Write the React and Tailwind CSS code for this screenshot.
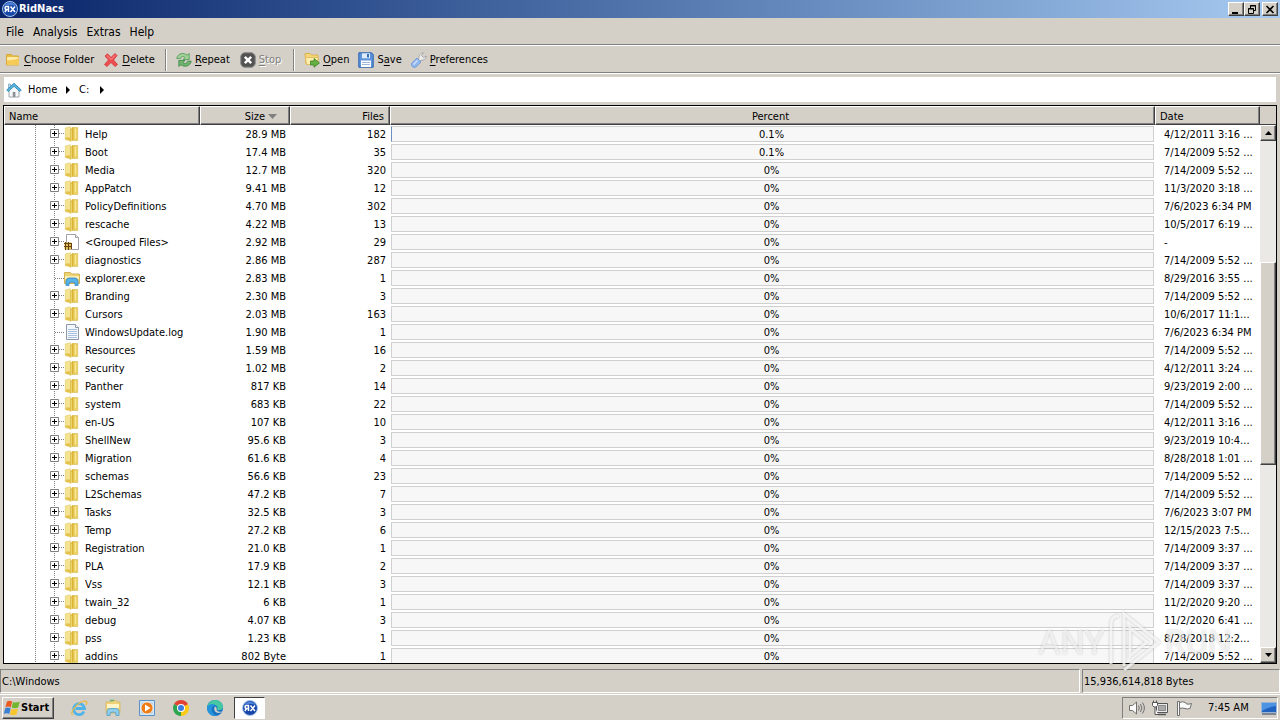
import React, { useState } from 'react';

const rows = [
    { name: "Help", size: "28.9 MB", files: 182, percent: "0.1%", date: "4/12/2011 3:16 ..." },
    { name: "Boot", size: "17.4 MB", files: 35, percent: "0.1%", date: "7/14/2009 5:52 ..." },
    { name: "Media", size: "12.7 MB", files: 320, percent: "0%", date: "7/14/2009 5:52 ..." },
    { name: "AppPatch", size: "9.41 MB", files: 12, percent: "0%", date: "11/3/2020 3:18 ..." },
    { name: "PolicyDefinitions", size: "4.70 MB", files: 302, percent: "0%", date: "7/6/2023 6:34 PM" },
    { name: "rescache", size: "4.22 MB", files: 13, percent: "0%", date: "10/5/2017 6:19 ..." },
    { name: "<Grouped Files>", size: "2.92 MB", files: 29, percent: "0%", date: "-", type: "group" },
    { name: "diagnostics", size: "2.86 MB", files: 287, percent: "0%", date: "7/14/2009 5:52 ..." },
    { name: "explorer.exe", size: "2.83 MB", files: 1, percent: "0%", date: "8/29/2016 3:55 ...", type: "exe" },
    { name: "Branding", size: "2.30 MB", files: 3, percent: "0%", date: "7/14/2009 5:52 ..." },
    { name: "Cursors", size: "2.03 MB", files: 163, percent: "0%", date: "10/6/2017 11:1..." },
    { name: "WindowsUpdate.log", size: "1.90 MB", files: 1, percent: "0%", date: "7/6/2023 6:34 PM", type: "log" },
    { name: "Resources", size: "1.59 MB", files: 16, percent: "0%", date: "7/14/2009 5:52 ..." },
    { name: "security", size: "1.02 MB", files: 2, percent: "0%", date: "4/12/2011 3:24 ..." },
    { name: "Panther", size: "817 KB", files: 14, percent: "0%", date: "9/23/2019 2:00 ..." },
    { name: "system", size: "683 KB", files: 22, percent: "0%", date: "7/14/2009 5:52 ..." },
    { name: "en-US", size: "107 KB", files: 10, percent: "0%", date: "4/12/2011 3:16 ..." },
    { name: "ShellNew", size: "95.6 KB", files: 3, percent: "0%", date: "9/23/2019 10:4..." },
    { name: "Migration", size: "61.6 KB", files: 4, percent: "0%", date: "8/28/2018 1:01 ..." },
    { name: "schemas", size: "56.6 KB", files: 23, percent: "0%", date: "7/14/2009 5:52 ..." },
    { name: "L2Schemas", size: "47.2 KB", files: 7, percent: "0%", date: "7/14/2009 5:52 ..." },
    { name: "Tasks", size: "32.5 KB", files: 3, percent: "0%", date: "7/6/2023 3:07 PM" },
    { name: "Temp", size: "27.2 KB", files: 6, percent: "0%", date: "12/15/2023 7:5..." },
    { name: "Registration", size: "21.0 KB", files: 1, percent: "0%", date: "7/14/2009 3:37 ..." },
    { name: "PLA", size: "17.9 KB", files: 2, percent: "0%", date: "7/14/2009 3:37 ..." },
    { name: "Vss", size: "12.1 KB", files: 3, percent: "0%", date: "7/14/2009 3:37 ..." },
    { name: "twain_32", size: "6 KB", files: 1, percent: "0%", date: "11/2/2020 9:20 ..." },
    { name: "debug", size: "4.07 KB", files: 3, percent: "0%", date: "11/2/2020 6:41 ..." },
    { name: "pss", size: "1.23 KB", files: 1, percent: "0%", date: "8/28/2018 12:2..." },
    { name: "addins", size: "802 Byte", files: 1, percent: "0%", date: "7/14/2009 5:52 ..." },
];

const raised = "border border-t-white border-l-white border-r-[#404040] border-b-[#404040] bg-[#d4d0c8] shadow-[inset_-1px_-1px_0_#808080]";

const AppLogo = () => (
    <svg width="16" height="16" viewBox="0 0 16 16">
        <circle cx="8" cy="8" r="7.500" fill="#1546a8" stroke="#a9c6f0" />
        <path d="M2.200 5a6.500 6.500 0 0 1 11.600 0Q8 3 2.200 5Z" fill="#4c80d6" />
        <path d="M6.500 11V5.500H4.500a1.500 1.500 0 0 0 0 3h2M4.700 8.500 2.800 11M8.500 5.500l4.500 5.500M13 5.500 8.500 11" fill="none" stroke="#fff" strokeWidth="1.500" />
    </svg>
);

const FolderIcon = () => (
    <svg width="16" height="16" viewBox="0 0 16 16">
        <path d="M1.500 2.500h5l1 1.500h6v9h-12z" fill="#e9bd45" stroke="#d9a93a" />
        <path d="M2 5h11.500v7.500H2z" fill="#fdeaa6" />
        <path d="M2 8.500q6 0 11.500-2v6H2z" fill="#f6cb55" />
    </svg>
);

const DeleteIcon = () => (
    <svg width="16" height="16" viewBox="0 0 16 16">
        <path d="M2 4 4.500 1.800 8 5.500 12 1.500 14 3.500 10.500 8 14.500 12.500 12 14.500 8 10.500 4 14.500 1.500 12.500 5.500 8Z" fill="#ee4d50" stroke="#d23439" strokeWidth=".8" />
        <path d="M4 3.500 8 7.500l4-4" stroke="#ff9a98" fill="none" />
    </svg>
);

const RepeatIcon = () => (
    <svg width="16" height="16" viewBox="0 0 16 16">
        <path d="M.8 6.500C1.500 1 8 .3 11 3.200L13.200 1.500v6H7L9 5.500C7 3.800 5 4.500 4.500 6.800Z" fill="#9ed098" stroke="#4c9652" strokeWidth=".8" />
        <path d="M15.200 9c-.7 5.500-7 6.500-10.200 3.700L2.800 14.500v-6H9L7 10.500c2 1.700 4 1 4.500-1.300Z" fill="#6fb56d" stroke="#3f8747" strokeWidth=".8" />
    </svg>
);

const StopIcon = () => (
    <svg width="16" height="16" viewBox="0 0 16 16">
        <path d="M4 .800h8Q14 1.500 15.200 4v8Q14 14.500 12 15.200H4Q1.500 14.500.8 12V4Q1.500 1.500 4 .800Z" fill="#525252" stroke="#858585" />
        <path d="m4.800 4.800 6.400 6.400M11.200 4.800l-6.400 6.400" stroke="#fff" strokeWidth="2.400" />
    </svg>
);

const OpenIcon = () => (
    <svg width="16" height="16" viewBox="0 0 16 16">
        <path d="M1 1.500h5L7.500 3H14v9H2z" fill="#f5d67a" stroke="#d9a93a" strokeWidth=".8" />
        <path d="M1.500 5.500h13L12.500 12.500H2.500z" fill="#fdeeb0" stroke="#e0b850" strokeWidth=".8" />
        <path d="M6.500 9H10V6.500l5.500 4.400L10 15.300V13H6.500z" fill="#66b045" stroke="#3c8028" strokeWidth=".8" />
    </svg>
);

const SaveIcon = () => (
    <svg width="16" height="16" viewBox="0 0 16 16">
        <path d="M.8.800h12.700L15.200 2.500v12.700H.8z" fill="#5d94dc" stroke="#2c61ae" />
        <path d="M4 1.300h8v5H4z" fill="#dcecfb" />
        <path d="M9 2h2v3.500H9z" fill="#386fb8" />
        <path d="M3 8.500h10V15H3z" fill="#fff" />
        <path d="M4 10.500h8M4 12.500h8" stroke="#9db8d8" />
    </svg>
);

const WrenchIcon = () => (
    <svg width="16" height="16" viewBox="0 0 16 16">
        <path d="M8 6.500C7.500 3.500 9.500 1 12.500.800L10.500 3.500l2 2L15.300 4c0 3-2.500 4.500-5.300 4.200L8.500 9.500 7 8Z" fill="#ececec" stroke="#9b9b9b" strokeWidth=".8" />
        <path d="M6 6 10 10 5 15C2 16.500-.8 13.500.8 11Z" fill="#92b6ee" stroke="#6a92d4" strokeWidth=".8" />
        <path d="M6.500 8.500 2.500 12.500" stroke="#cfe0fb" strokeWidth="1.400" />
    </svg>
);

const HomeIcon = () => (
    <svg width="16" height="16" viewBox="0 0 16 16">
        <path d="M3 7.500 8 3l5 4.500V15H3z" fill="#f6f8fa" stroke="#8b9298" strokeWidth=".8" />
        <path d="M2.500 2h2v4h-2z" fill="#c1dbe9" stroke="#5c95b5" strokeWidth=".6" />
        <path d="M.7 8 8 1.200 15.300 8l-1.500 1.500L8 4.300 2.200 9.500Z" fill="#55b4df" stroke="#2b7fad" strokeWidth=".8" />
        <path d="M6.800 10h2.600v5H6.800z" fill="#8a8f95" />
    </svg>
);

const RowIcon = ({ type }) => {
    if (type === "group") {
        return (
            <svg width="16" height="16" viewBox="0 0 16 16">
                <path d="M2.500.500h9l3 3v12h-12z" fill="#fff" stroke="#a3a0a8" />
                <path d="M11.500.500v3h3" fill="#e8e8e8" stroke="#a3a0a8" />
                <path d="M.5 8.500h7v7h-7z" fill="#e3bd5a" />
                <path d="M1.500 8v8M4.500 8v8M7.500 9v6M0 9.500h8M0 12.500h8" stroke="#65430c" />
            </svg>
        );
    }
    if (type === "exe") {
        return (
            <svg width="16" height="16" viewBox="0 0 16 16">
                <path d="M.5 2.500h6l1 1.500h8v9.500H.5z" fill="#edd374" stroke="#d3b352" />
                <path d="M1 6h14v3H1z" fill="#fbeeb0" />
                <path d="M2 15.500V11Q2.500 8 5 8h6q2.500 0 3 3v4.500h-3V13q-3-2-6 0v2.500z" fill="#58b3ea" stroke="#2f86c8" strokeWidth=".8" />
            </svg>
        );
    }
    if (type === "log") {
        return (
            <svg width="16" height="16" viewBox="0 0 16 16">
                <path d="M2.500.500h9l3 3v12h-12z" fill="#f3f7fb" stroke="#8d99a8" />
                <path d="M11.500.500v3h3" fill="#fff" stroke="#8d99a8" />
                <path d="M4 5.500h9M4 7.500h9M4 9.500h9M4 11.500h9M4 13.500h9" stroke="#a9c1dc" />
            </svg>
        );
    }
    return (
        <svg width="16" height="16" viewBox="0 0 16 16">
            <path d="M1.300 2 6.500.800V15L1.300 13.500z" fill="#f4e391" stroke="#e0c864" strokeWidth=".6" />
            <path d="M8 1.500h5.700V14.500H8z" fill="#ecd264" stroke="#d5b94f" strokeWidth=".6" />
            <path d="M6 3.500 9.500 1v12.500L6 15.800z" fill="#d9b236" />
            <path d="M7.200 3.500v11.300" stroke="#f3e38a" />
            <path d="M11.500 3v9" stroke="#f8e99a" strokeWidth="1.200" />
            <path d="M1.500 11.500h4.500v3l-4.500-1z" fill="#e3c14a" />
        </svg>
    );
};

// dotted guide lines and the [+] box left of every row
const TreeGutter = ({ leaf, name }) => (
    <>
        <svg width="46" height="18" className="shrink-0">
            <path d="M31.500 0v18" stroke="#808080" strokeDasharray="1 1" />
        </svg>
        {leaf ? (
            <svg width="14" height="18" className="shrink-0">
                <path d="M4.500 0v18M5 9.500h9" stroke="#808080" strokeDasharray="1 1" />
            </svg>
        ) : (
            <button type="button" aria-label={"Expand " + name} className="shrink-0">
                <svg width="14" height="18">
                    <path d="M4.500 0v18M9 8.500h5" stroke="#808080" strokeDasharray="1 1" />
                    <path d="M.5 4.500h8v8h-8z" fill="#fff" stroke="#808080" />
                    <path d="M2 8.500h5M4.500 6v5" stroke="#000" />
                </svg>
            </button>
        )}
    </>
);

const ToolButton = ({ icon, label, hot, disabled }) => {
    const at = label.indexOf(hot);
    return (
        <button
            type="button"
            disabled={disabled}
            className="flex items-center gap-[3px] disabled:text-[#808080] disabled:[text-shadow:1px_1px_0_#fff]"
        >
            {icon}
            <span className="pt-px">
                {label.slice(0, at)}
                <u className="underline-offset-2">{hot}</u>
                {label.slice(at + 1)}
            </span>
        </button>
    );
};

const Separator = () => (
    <div className="h-[22px] w-[2px] border-l border-r border-l-[#808080] border-r-white"></div>
);

const Header = ({ children, className }) => (
    <th className={"h-[19px] border-b border-r border-b-[#404040] border-r-[#404040] border-t border-t-white border-l border-l-white bg-[#d4d0c8] px-1 pt-[2px] pb-0 font-normal shadow-[inset_-1px_-1px_0_#808080] " + className}>
        {children}
    </th>
);

const IeIcon = () => (
    <svg width="18" height="18" viewBox="0 0 18 18">
        <path d="M14 12.500A5.500 5.500 0 1 1 14.500 9.500H5.500" fill="none" stroke="#4fb3e8" strokeWidth="2.800" />
        <path d="M2.500 16C-1 13.500 9 1.500 15.500 2.200 18 2.500 16.500 5 16 6" fill="none" stroke="#e5bb52" strokeWidth="1.400" />
    </svg>
);

const ExplorerIcon = () => (
    <svg width="18" height="18" viewBox="0 0 18 18">
        <path d="M2 3h5l1-1.500h4L13 3h3v11H2z" fill="#f0d27a" stroke="#d8b75a" strokeWidth=".8" />
        <path d="M3 5h12v4H3z" fill="#fff5c8" />
        <path d="M6 1.500h4" stroke="#68b46c" strokeWidth="1.500" />
        <path d="M3 16.500V12q.5-2.500 3-2.500h6q2.500 0 3 2.500v4.500h-3V14q-3-2-6 0v2.500z" fill="#8fcdec" stroke="#519fca" strokeWidth=".8" />
    </svg>
);

const MediaIcon = () => (
    <svg width="18" height="18" viewBox="0 0 18 18">
        <path d="M1.500 1.500h15v15h-15z" fill="#d4e4f4" stroke="#5992c7" />
        <path d="M3.500 3.500h11v11h-11z" fill="#a9c9e8" />
        <circle cx="9" cy="9" r="6" fill="#ee7d15" stroke="#fff" strokeWidth=".7" />
        <path d="m7 5.500 5.500 3.500L7 12.500z" fill="#fff" />
    </svg>
);

const ChromeIcon = () => (
    <svg width="18" height="18" viewBox="0 0 18 18">
        <path d="M9 9 2.100 5A8 8 0 0 1 15.900 5Z" fill="#e04334" />
        <path d="M9 9 15.900 5A8 8 0 0 1 9 17Z" fill="#fbc916" />
        <path d="M9 9v8A8 8 0 0 1 2.100 5Z" fill="#2da44e" />
        <path d="M9 5h6.900L9 9z" fill="#e04334" />
        <circle cx="9" cy="9" r="4" fill="#fff" />
        <circle cx="9" cy="9" r="3" fill="#3b7de0" />
    </svg>
);

const EdgeIcon = () => (
    <svg width="18" height="18" viewBox="0 0 18 18">
        <circle cx="9" cy="9" r="8" fill="#1673c4" />
        <path d="M1.200 8C2 3.500 5.500 1 9.500 1c5 0 8 4 7.300 7.500-.5 2.300-2.800 3.300-5.800 2.500 1.500-3-.5-5-3-5C4.500 6 2 7 1.200 8Z" fill="#45c7a4" />
        <path d="M1.200 8C2.500 5 7 4 9.500 6.500 6.500 6.500 5 9 6 12c1 3 3 4.500 5 4.800C5 18 .5 13.500 1.200 8Z" fill="#2694dc" />
        <path d="M9 7.500c2 1 2 2.500 1.500 3.500 1 2 4 2.200 6 1.200-2 2.300-6 2.300-7.500 0-1-1.500-1-3.500 0-4.700Z" fill="#d4d0c8" />
    </svg>
);

const WindowsFlag = () => (
    <svg width="16" height="16" viewBox="0 0 16 16">
        <path d="M3 1.500Q5.500 0 8.200 1.500L6.900 7.300Q4.300 5.800 1.400 7.200Z" fill="#ea5a24" />
        <path d="M9 2Q12 3.300 15.700 1.500L14.200 7.600Q10.700 9 7.700 7.600Z" fill="#72b62e" />
        <path d="M1.200 8.200Q4 6.800 6.700 8.300L5.300 14Q2.800 12.500-.2 13.900Z" fill="#3c80d2" />
        <path d="M7.500 8.700Q10.400 10 14 8.500L12.500 14.500Q9 16 6 14.500Z" fill="#f6c62c" />
    </svg>
);

const SpeakerIcon = () => (
    <svg width="18" height="16" viewBox="0 0 18 16" fill="none" stroke="#6e6e6e">
        <path d="M1.500 5.500h3L8.500 2v12l-4-3.500h-3z" fill="#fafafa" />
        <path d="M10.500 5.500q1.500 2.500 0 5M12.500 4q2.700 4 0 8M14.500 2.500q3.800 5.500 0 11" />
    </svg>
);

const NetworkIcon = () => (
    <svg width="16" height="16" viewBox="0 0 16 16" fill="none" stroke="#555">
        <path d="M4.500 3.500h11v9h-11z" fill="#e8e8e8" />
        <path d="M6.500 5.500h7v5h-7z" fill="#aaa" stroke="#8a8a8a" />
        <path d="M6 14.500h8" strokeWidth="1.500" />
        <path d="M.5 2.500h5v3L4 7H2L.5 5.500zM1.500.500v2M4.500.500v2M3 7v7.500h3" fill="#fff" />
    </svg>
);

const FlagIcon = () => (
    <svg width="16" height="16" viewBox="0 0 16 16" fill="#fafafa" stroke="#6e6e6e">
        <path d="M3.500 2.500q3-1.500 6 0l1 1.500q2.500.500 5-.5l-1.500 5q-2.500 1-5 0-2.500-1-5.500 0z" />
        <path d="M1.500 1.500h2v14h-2z" />
    </svg>
);

const DesktopIcon = () => (
    <svg width="16" height="14" viewBox="0 0 16 14">
        <path d="M.5 1.500h15v10H.5z" fill="#1f62c0" stroke="#9bb4d4" />
        <path d="M1 2h14v3Q7 6 1 10z" fill="#4d93e4" />
        <path d="M1 13h14" stroke="#26395c" />
    </svg>
);

const Watermark = () => (
    <div aria-hidden="true" className="pointer-events-none absolute right-[48px] bottom-[46px] flex items-center gap-[2px] font-[Roboto,sans-serif] text-[34px] leading-none text-white/60 [filter:drop-shadow(0_0_1px_rgba(0,0,0,0.3))]">
        <span>ANY</span>
        <svg width="56" height="64" viewBox="0 0 56 64" fill="none" stroke="#fff" strokeOpacity=".75" strokeWidth="3">
            <path d="M4 54V14Q4 6 12 6M17 56V4L52 32 17 60M23 18v28l17-14z" />
        </svg>
        <span>RUN</span>
    </div>
);

const App = () => {
    const [selected, setSelected] = useState(null);

    return (
        <div className="relative flex h-screen flex-col overflow-hidden bg-[#d4d0c8] font-['DejaVu_Sans_Condensed','DejaVu_Sans',sans-serif] text-[11px] leading-[14px] text-black">
            {/* Title bar */}
            <header className="flex h-[18px] shrink-0 items-center justify-between bg-linear-to-r from-[#0a246a] to-[#a6caf0] pr-[2px] pl-[2px]">
                <div className="flex items-center gap-px">
                    <AppLogo />
                    <h1 className="font-bold text-white">RidNacs</h1>
                </div>
                <div className="flex">
                    <button type="button" aria-label="Minimize" className={"flex h-[14px] w-4 items-center justify-center " + raised}>
                        <svg width="10" height="9"><path d="M1 7h6v2H1z" /></svg>
                    </button>
                    <button type="button" aria-label="Restore" className={"flex h-[14px] w-4 items-center justify-center " + raised}>
                        <svg width="10" height="9" fill="none" stroke="#000">
                            <path d="M3.500 3V.500h5v5H7M3 1h6M1.500 3.500h5v5h-5zM1 4h6" />
                        </svg>
                    </button>
                    <button type="button" aria-label="Close" className={"ml-[2px] flex h-[14px] w-4 items-center justify-center " + raised}>
                        <svg width="10" height="9" stroke="#000" strokeWidth="1.600"><path d="m1.500 1 7 7M8.500 1l-7 7" /></svg>
                    </button>
                </div>
            </header>

            {/* Menu */}
            <nav className="flex h-[27px] shrink-0 items-center gap-[9px] border-b border-[#808080] px-[6px] pt-[2px] text-[12px]">
                <button type="button">File</button>
                <button type="button">Analysis</button>
                <button type="button">Extras</button>
                <button type="button">Help</button>
            </nav>

            {/* Toolbar */}
            <div className="flex h-7 shrink-0 items-center border-t border-b border-t-white border-b-[#808080] px-[5px] pt-px">
                <div className="flex w-[160px] gap-[9px]">
                    <ToolButton icon={<FolderIcon />} label="Choose Folder" hot="C" />
                    <ToolButton icon={<DeleteIcon />} label="Delete" hot="D" />
                </div>
                <Separator />
                <div className="flex w-[126px] gap-[10px] pl-[9px]">
                    <ToolButton icon={<RepeatIcon />} label="Repeat" hot="R" />
                    <ToolButton icon={<StopIcon />} label="Stop" hot="S" disabled />
                </div>
                <Separator />
                <div className="flex gap-[9px] pl-[9px]">
                    <ToolButton icon={<OpenIcon />} label="Open" hot="O" />
                    <ToolButton icon={<SaveIcon />} label="Save" hot="a" />
                    <ToolButton icon={<WrenchIcon />} label="Preferences" hot="P" />
                </div>
            </div>

            {/* Breadcrumb */}
            <div className="shrink-0 border-t border-white px-1 pt-[3px] pb-[3px]">
                <div className="flex h-[25px] items-center bg-white px-[2px]">
                    <HomeIcon />
                    <a href="#home" className="ml-[6px] w-[38px] pt-px">Home</a>
                    <svg width="5" height="8"><path d="M0 0v8l4-4z" /></svg>
                    <a href="#c" className="ml-2 w-[21px] pt-px">C:</a>
                    <svg width="5" height="8"><path d="M0 0v8l4-4z" /></svg>
                </div>
            </div>

            {/* Folder list */}
            <main className="mx-[3px] flex min-h-0 flex-1 overflow-hidden border border-black bg-white">
                <div className="min-w-0 flex-1 overflow-hidden">
                    <table className="w-full table-fixed border-separate border-spacing-0">
                        <colgroup>
                            <col className="w-[196px]" />
                            <col className="w-[90px]" />
                            <col className="w-[100px]" />
                            <col />
                            <col className="w-[105px]" />
                        </colgroup>
                        <thead>
                            <tr>
                                <Header className="text-left">Name</Header>
                                <Header className="text-right">
                                    <span className="flex items-center justify-end gap-[3px] pr-2">
                                        Size
                                        <svg width="9" height="5"><path d="M0 0h9L4.500 5z" fill="#808080" /></svg>
                                    </span>
                                </Header>
                                <Header className="pr-[5px] text-right">Files</Header>
                                <Header className="pr-2 text-center">Percent</Header>
                                <Header className="text-left">Date</Header>
                            </tr>
                        </thead>
                        <tbody>
                            {rows.map((row) => (
                                <tr
                                    key={row.name}
                                    onClick={() => setSelected(row.name)}
                                    className={selected === row.name ? "bg-[#d4e4f8]" : ""}
                                >
                                    <td className="h-[18px] p-0">
                                        <div className="flex h-[18px] items-center">
                                            <TreeGutter leaf={row.type === "exe" || row.type === "log"} name={row.name} />
                                            <RowIcon type={row.type} />
                                            <span className="ml-[5px] pt-[2px] whitespace-nowrap">{row.name}</span>
                                        </div>
                                    </td>
                                    <td className="p-0 pt-[2px] pr-1 text-right">{row.size}</td>
                                    <td className="p-0 pt-[2px] pr-1 text-right">{row.files}</td>
                                    <td className="p-0 px-px">
                                        <div className={"h-4 border border-[#d0d0d0] bg-[#f7f7f7] pr-[2px] text-center leading-4 " + (row.name === "Help" ? "border-l-[#6a8fc0]" : "")}>
                                            {row.percent}
                                        </div>
                                    </td>
                                    <td className="p-0 pt-[2px] pl-[9px] whitespace-nowrap">{row.date}</td>
                                </tr>
                            ))}
                        </tbody>
                    </table>
                </div>
                <div className="flex w-4 shrink-0 flex-col bg-[#ebe9e5]">
                    <div className="h-[19px] border-b border-[#404040] bg-[#d4d0c8]"></div>
                    <button type="button" aria-label="Scroll up" className={"flex h-4 items-center justify-center " + raised}>
                        <svg width="7" height="4"><path d="M0 4h7L3.500 0z" /></svg>
                    </button>
                    <div className="grow-[121]"></div>
                    <div className={"grow-[202] " + raised}></div>
                    <div className="grow-[183]"></div>
                    <button type="button" aria-label="Scroll down" className={"flex h-4 items-center justify-center " + raised}>
                        <svg width="7" height="4"><path d="M0 0h7L3.500 4z" /></svg>
                    </button>
                </div>
            </main>

            {/* Status bar */}
            <footer className="mt-[5px] flex h-[24px] shrink-0 gap-[2px]">
                <div className="flex flex-1 items-center border border-t-[#808080] border-r-white border-b-white border-l-[#808080] pt-[2px] pl-px">C:\Windows</div>
                <div className="flex w-[198px] items-center border border-t-[#808080] border-r-white border-b-white border-l-[#808080] pt-[2px] pl-px">15,936,614,818 Bytes</div>
            </footer>

            {/* Taskbar */}
            <div className="mt-px flex h-[26px] shrink-0 items-center border-t border-white pr-[2px] pl-[2px]">
                <button type="button" className={"flex h-[22px] w-[52px] items-center gap-px pl-px font-bold " + raised}>
                    <WindowsFlag />
                    Start
                </button>
                <div className="ml-4 flex gap-4">
                    <button type="button" aria-label="Internet Explorer"><IeIcon /></button>
                    <button type="button" aria-label="Explorer"><ExplorerIcon /></button>
                    <button type="button" aria-label="Media Player"><MediaIcon /></button>
                    <button type="button" aria-label="Chrome"><ChromeIcon /></button>
                    <button type="button" aria-label="Edge"><EdgeIcon /></button>
                </div>
                <button type="button" aria-label="RidNacs" className="ml-[10px] flex h-[22px] w-[31px] items-center justify-center border border-t-[#404040] border-r-white border-b-white border-l-[#404040] bg-white">
                    <AppLogo />
                </button>
                <div className="ml-auto flex h-[22px] w-[156px] items-center border border-t-[#808080] border-r-white border-b-white border-l-[#808080] pl-[5px]">
                    <SpeakerIcon />
                    <span className="ml-[6px]"><NetworkIcon /></span>
                    <span className="ml-2"><FlagIcon /></span>
                    <time className="mr-auto ml-4 whitespace-nowrap">7:45 AM</time>
                    <DesktopIcon />
                </div>
            </div>

            <Watermark />
        </div>
    );
};

export default App;
